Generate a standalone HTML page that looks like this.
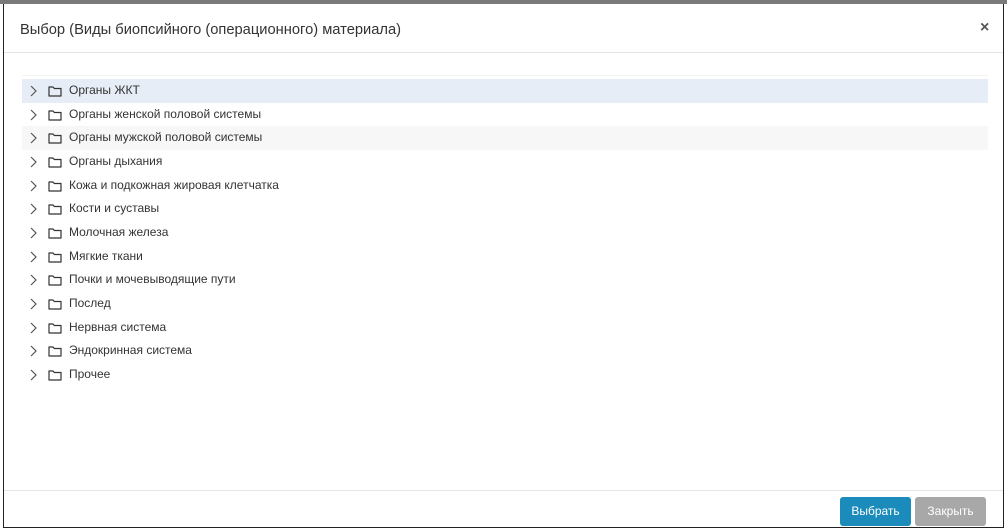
<!DOCTYPE html>
<html><head><meta charset="utf-8"><style>
*{box-sizing:border-box;margin:0;padding:0}
body{width:1007px;height:530px;background:#fff;font-family:"Liberation Sans",Arial,sans-serif;position:relative;overflow:hidden}
.topbar{position:absolute;left:0;top:0;width:1007px;height:4px;background:#7a7a7a}
.frame{position:absolute;left:3px;top:4px;width:1001px;height:524px;border-left:1px solid #222;border-right:1px solid #222;border-bottom:1px solid #222;background:#fff}
.title{position:absolute;left:20px;top:22px;font-size:14.7px;color:#333}
.close{position:absolute;left:980px;top:19px;font-size:16px;color:#555;font-weight:bold}
.hline{position:absolute;left:4px;width:999px;height:1px;background:#e5e5e5}
.row{position:absolute;left:22px;width:966px;height:23.6px;font-size:12px;color:#333;line-height:23.6px}
.row svg{position:absolute;top:0}
.row span{position:absolute;left:47px}
.b{position:absolute;top:497px;height:29px;width:71px;border-radius:3px;color:#fff;font-size:12px;text-align:center;line-height:29px}
</style></head><body>
<div class="topbar"></div>
<div class="frame"></div>
<div class="title">Выбор (Виды биопсийного (операционного) материала)</div>
<div class="close">×</div>
<div class="hline" style="top:52px"></div>
<div class="hline" style="top:75px;left:22px;width:966px;background:#f4f4f4"></div>
<div id="list"></div>
<div class="hline" style="top:490px"></div>
<div class="b" style="left:840px;background:#1a8bbb">Выбрать</div>
<div class="b" style="left:915px;background:#a8a8a8">Закрыть</div>
<script>
var items=["Органы ЖКТ","Органы женской половой системы","Органы мужской половой системы","Органы дыхания","Кожа и подкожная жировая клетчатка","Кости и суставы","Молочная железа","Мягкие ткани","Почки и мочевыводящие пути","Послед","Нервная система","Эндокринная система","Прочее"];
var h='';
items.forEach(function(t,i){
var bg=i==0?'#e7edf6':(i==2?'#f7f7f7':'transparent');
h+='<div class="row" style="top:'+(79+i*23.65)+'px;background:'+bg+'"><svg width="40" height="24" viewBox="0 0 40 24"><path d="M9 7l5 5-5 5" fill="none" stroke="#555" stroke-width="1.2"/><path d="M27 8h4l1.3 1.5H39v7.5H27z" fill="none" stroke="#333" stroke-width="1.2" stroke-linejoin="round"/></svg><span>'+t+'</span></div>';
});
document.getElementById('list').innerHTML=h;
</script>
</body></html>
